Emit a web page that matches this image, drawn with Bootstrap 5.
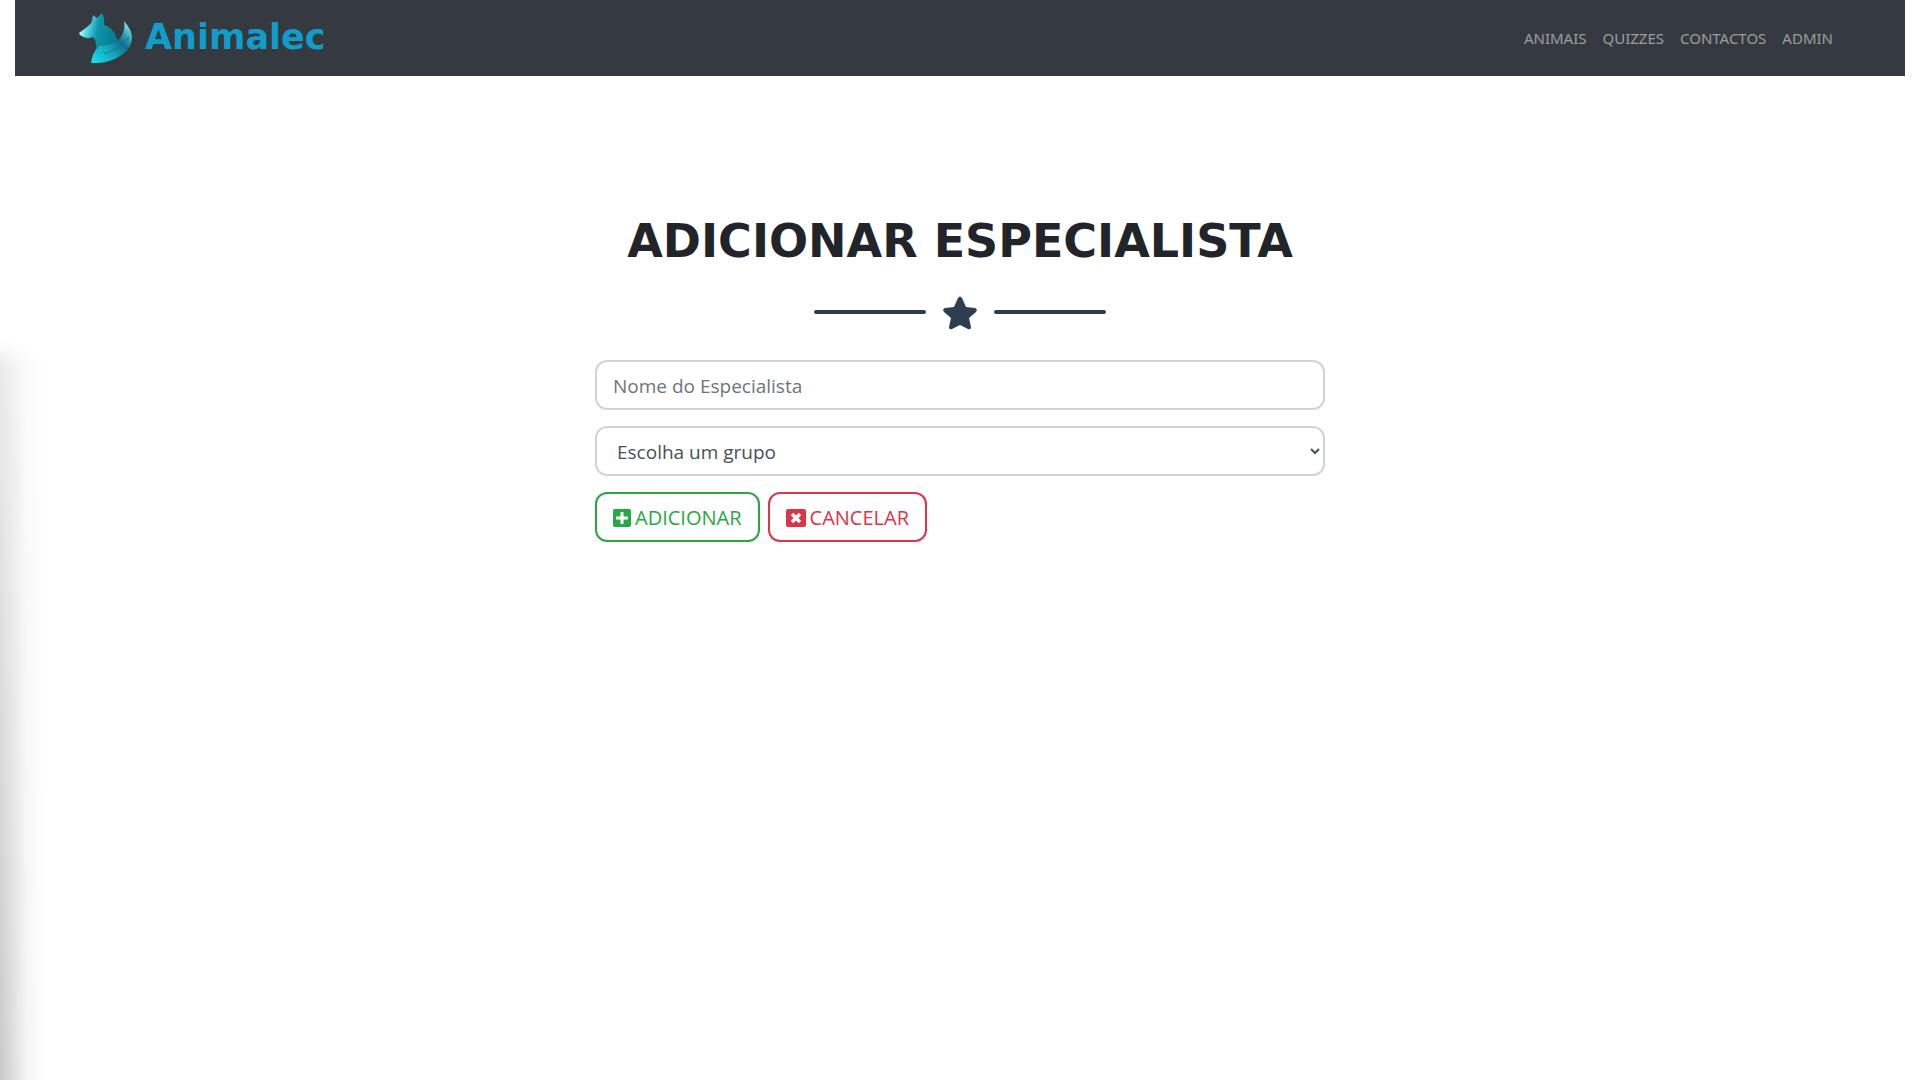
<!DOCTYPE html>
<html lang="pt">
<head>
<meta charset="utf-8">
<meta name="viewport" content="width=device-width, initial-scale=1">
<title>Animalec</title>
<link href="https://cdn.jsdelivr.net/npm/bootstrap@5.3.0/dist/css/bootstrap.min.css" rel="stylesheet">
<style>
body { font-family: "Open Sans", "Noto Sans", sans-serif; min-height: 100vh; background: #fff; color: #212529; }
/* soft shadow along the left edge of the page */
.edge-shade { position: absolute; left: 0; top: 340px; bottom: 0; width: 48px; z-index: -1;
  background: linear-gradient(to right, rgba(0,0,0,.21), rgba(0,0,0,.13) 28%, rgba(0,0,0,.045) 55%, rgba(0,0,0,.01) 80%, transparent);
  -webkit-mask-image: linear-gradient(to bottom, transparent, rgba(0,0,0,.4) 28px, rgba(0,0,0,.6) 280px, #000); }
.page-head { padding: 0 15px; }
.top-bar { background: #343a40; height: 76px; padding: 0 64px; }
.brand-link { gap: 13px; }
.brand-word { font: 700 35px/40px "DejaVu Sans", sans-serif; color: #119dca; padding-bottom: 2px; }
.top-bar .nav-link { font-family: "Noto Sans", sans-serif; font-size: 15px; line-height: 24px; color: rgba(255,255,255,.5); padding: 0 8px; }
.page-title { font: 700 46px/58px "DejaVu Sans", sans-serif; margin-top: 136px; margin-bottom: 22px; }
.star-divider { margin-bottom: 28px; }
.divider-line { width: 112px; height: 4px; border-radius: 4px; background: #2c3e50; }
.entry-form { max-width: 730px; }
.entry-form .form-control, .entry-form .btn { height: 50px; border-width: 2px; border-radius: 12px; font-size: 19px; line-height: 28px; padding: 9px 16px 7px; }
.entry-form .form-control { border-color: #ced4da; color: #495057; background-color: #fff; }
.entry-form select.form-control { appearance: auto; padding: 9px 0 7px 16px; }
.entry-form .form-control::placeholder { color: #6c757d; }
.entry-form .btn { display: inline-flex; align-items: center; gap: 4px; background: #fff; font-size: 20px; }
.entry-form .btn-add { color: #28a745; border-color: #28a745; }
.entry-form .btn-cancel { color: #dc3545; border-color: #dc3545; }
</style>
</head>
<body class="position-relative">
<div class="edge-shade"></div>
<header class="page-head">
  <nav class="top-bar d-flex align-items-center justify-content-between">
    <a href="#" class="brand-link d-flex align-items-center text-decoration-none">
      <svg width="53" height="50" viewBox="0 0 53 50" aria-hidden="true">
        <defs>
          <linearGradient id="head" x1="0" y1=".5" x2="1" y2=".7"><stop offset="0" stop-color="#b5ffff"/><stop offset=".2" stop-color="#54d3dc"/><stop offset=".45" stop-color="#1093aa"/><stop offset="1" stop-color="#04798f"/></linearGradient>
          <linearGradient id="tail" x1="0" y1="1" x2="1" y2="0"><stop offset="0" stop-color="#12e4ed"/><stop offset=".4" stop-color="#16a2b8"/><stop offset=".62" stop-color="#117090"/><stop offset=".8" stop-color="#45b5c5"/><stop offset="1" stop-color="#d8ffff"/></linearGradient>
        </defs>
        <path fill="#47b8c8" d="M12 12 14 2 19 6 18 14Z"/>
        <path fill="url(#head)" d="M0 20 8 14Q12 10 17 6L23 0Q26 5 25 12Q32 14 36 21L39 28 35 36 18 39 17 31Q17 27 14 24Q7 27 1 22Z"/>
        <path fill="url(#tail)" d="M12 50Q13 40 20 33Q29 33 38 28Q47 21 45 8Q53 17 53 25Q53 34 44 41Q31 51 12 50Z"/>
        <path fill="none" stroke="#0e6889" stroke-opacity=".35" stroke-width="2" d="M25 41Q42 36 50 24"/>
      </svg>
      <span class="brand-word">Animalec</span>
    </a>
    <ul class="nav">
      <li class="nav-item"><a class="nav-link" href="#">ANIMAIS</a></li>
      <li class="nav-item"><a class="nav-link" href="#">QUIZZES</a></li>
      <li class="nav-item"><a class="nav-link" href="#">CONTACTOS</a></li>
      <li class="nav-item"><a class="nav-link" href="#">ADMIN</a></li>
    </ul>
  </nav>
</header>
<main class="container">
  <h1 class="page-title text-center">ADICIONAR ESPECIALISTA</h1>
  <div class="star-divider d-flex align-items-center justify-content-center gap-3">
    <div class="divider-line"></div>
    <svg width="36" height="40" viewBox="0 0 36 40" aria-hidden="true"><path fill="#2c3e50" d="M16 6Q18 3 20 6L24 15 33 16Q36 17 34 20L27 26 29 35Q29 38 26 37L18 33 10 37Q7 38 7 35L9 26 2 20Q0 17 3 16L12 15Z"/></svg>
    <div class="divider-line"></div>
  </div>
  <form class="entry-form mx-auto">
    <input type="text" class="form-control mb-3" placeholder="Nome do Especialista" aria-label="Nome do Especialista">
    <select class="form-control mb-3" aria-label="Grupo"><option>Escolha um grupo</option></select>
    <div class="d-flex gap-2">
      <button type="submit" class="btn btn-add"><svg width="18" height="18" viewBox="0 0 18 18" aria-hidden="true"><rect width="18" height="18" rx="2" fill="currentColor"/><path d="M9 3v12M3 9h12" stroke="#fff" stroke-width="3"/></svg>ADICIONAR</button>
      <button type="button" class="btn btn-cancel"><svg width="20" height="18" viewBox="0 0 20 18" aria-hidden="true"><rect width="20" height="18" rx="2" fill="currentColor"/><path d="M6 5l8 8M14 5l-8 8" stroke="#fff" stroke-width="3.4"/></svg>CANCELAR</button>
    </div>
  </form>
</main>
<script src="https://cdn.jsdelivr.net/npm/bootstrap@5.3.0/dist/js/bootstrap.bundle.min.js"></script>
</body>
</html>
